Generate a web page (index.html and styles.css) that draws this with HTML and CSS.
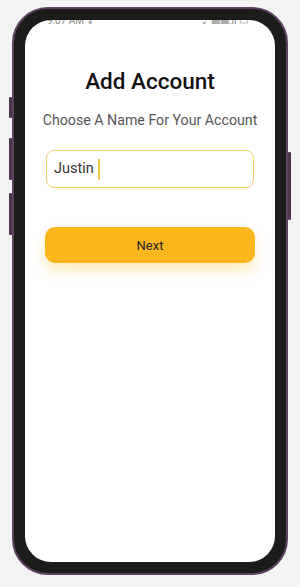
FILE: index.html
```html
<!DOCTYPE html>
<html lang="en">
<head>
	<meta charset="UTF-8">
	<meta name="viewport" content="width=device-width, initial-scale=1.0">
	<title>Add Account</title>
	<link rel="stylesheet" href="styles.css">
</head>
<body>
	<div class="phone">
		<span class="btn-side left b1"></span>
		<span class="btn-side left b2"></span>
		<span class="btn-side left b3"></span>
		<span class="btn-side right b4"></span>
		<div class="screen">
			<div class="status">
				<span class="time">9:07 AM &#8615;</span>
				<span class="icons">&#8964; &#9641;&#9641;.ıl &#9645;</span>
			</div>
			<h1 class="title">Add Account</h1>
			<p class="subtitle">Choose A Name For Your Account</p>
			<div class="field">
				<span class="value">Justin</span>
				<span class="caret"></span>
			</div>
			<div class="next">Next</div>
		</div>
	</div>
</body>
</html>
```

FILE: styles.css
```css
*{
	margin: 0;
	padding: 0;
	box-sizing: border-box;
}
body{
	background: #f3f3f3;
	padding: 7px 12px 0;
	font-family: Roboto, "Liberation Sans", sans-serif;
}
.phone{
	position: relative;
	width: 276px;
	height: 568px;
	padding: 11px;
	background: #1c1c1a;
	border: 2px solid #5d4260;
	border-radius: 36px;
}
/* side buttons sit outside the frame */
.btn-side{
	position: absolute;
	width: 3px;
	background: #4e3550;
	border-radius: 1px;
}
.btn-side.left{ left: -5px; }
.btn-side.right{ right: -5px; }
.b1{ top: 88px; height: 21px; }
.b2{ top: 129px; height: 42px; }
.b3{ top: 184px; height: 42px; }
.b4{ top: 143px; height: 68px; }

.screen{
	height: 100%;
	background: #fff;
	border-radius: 26px;
	overflow: hidden;
	padding: 0 20px;
}
.status{
	height: 4px;
	overflow: hidden;
	display: flex;
	justify-content: space-between;
	align-items: flex-end;
	padding: 0 7px 0 2px;
	font-size: 10px;
	line-height: 10px;
	color: #8a8a8a;
	margin-bottom: -2px;
}
.status span{
	position: relative;
	top: 2px;
}
.title{
	margin-top: 46px;
	text-align: center;
	font-size: 22.5px;
	line-height: 26px;
	font-weight: 500;
	color: #111;
}
.subtitle{
	margin: 17px -10px 0;
	text-align: center;
	font-size: 14.2px;
	line-height: 18px;
	color: #555;
	white-space: nowrap;
}
.field{
	margin: 21px 1px 0;
	height: 38px;
	display: flex;
	align-items: center;
	padding: 0 7px;
	border: 1px solid #f2cf72;
	border-radius: 8px;
}
.value{
	font-size: 14.5px;
	line-height: 20px;
	color: #333;
}
.caret{
	width: 2px;
	height: 21px;
	margin-left: 4px;
	background: #f5c84a;
}
.next{
	margin-top: 39px;
	height: 36px;
	display: flex;
	align-items: center;
	justify-content: center;
	background: #fdb71d;
	border-radius: 10px;
	box-shadow: 0 8px 14px rgba(253, 183, 29, 0.28);
	font-size: 13px;
	color: #222;
}
```
